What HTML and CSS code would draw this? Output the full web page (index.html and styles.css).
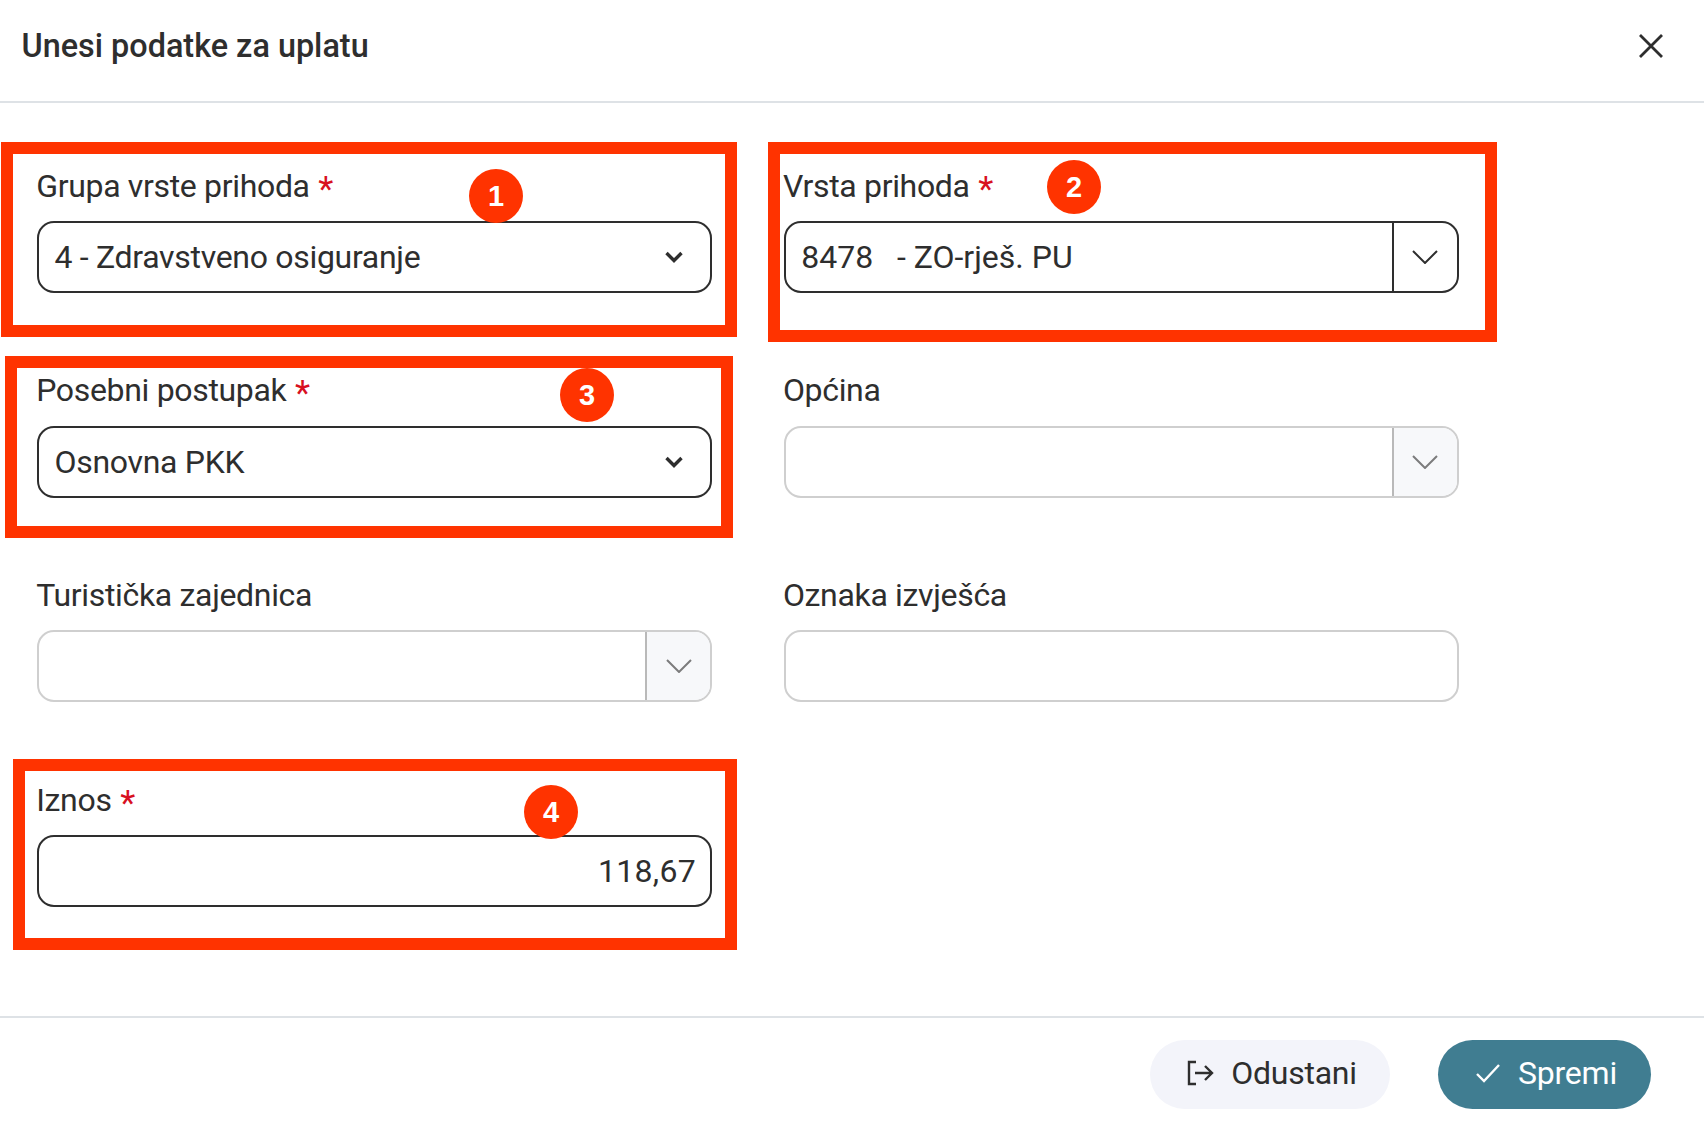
FILE: index.html
```html
<!DOCTYPE html>
<html lang="hr">
<head>
<meta charset="UTF-8" />
<meta name="viewport" content="width=device-width, initial-scale=1" />
<title>Unesi podatke za uplatu</title>
<link rel="stylesheet" href="styles.css">
</head>
<body>

<div class="dialog">
  <div class="dialog-header">
    <h1>Unesi podatke za uplatu</h1>
    <button class="close-btn" aria-label="Zatvori">
      <svg width="26" height="26" viewBox="0 0 26 26"><path d="M2 2 L24 24 M24 2 L2 24" /></svg>
    </button>
  </div>

  <div class="dialog-body">
    <div class="form-grid">
      <div class="field">
        <label>Grupa vrste prihoda <span class="req">*</span></label>
        <div class="control select">
          <span class="value">4 - Zdravstveno osiguranje</span>
          <svg class="chev-bold" width="18" height="12" viewBox="0 0 18 12"><path d="M1.5 2 L9 9.5 L16.5 2" /></svg>
        </div>
      </div>
      <div class="field">
        <label>Vrsta prihoda <span class="req">*</span></label>
        <div class="control combo">
          <span class="value">8478&nbsp;&nbsp; - ZO-rješ. PU</span>
          <span class="addon">
            <svg class="chev" width="26" height="14" viewBox="0 0 26 14"><path d="M1 1 L13 13 L25 1" /></svg>
          </span>
        </div>
      </div>
      <div class="field">
        <label>Posebni postupak <span class="req">*</span></label>
        <div class="control select">
          <span class="value">Osnovna PKK</span>
          <svg class="chev-bold" width="18" height="12" viewBox="0 0 18 12"><path d="M1.5 2 L9 9.5 L16.5 2" /></svg>
        </div>
      </div>
      <div class="field">
        <label>Općina</label>
        <div class="control combo disabled">
          <span class="value"></span>
          <span class="addon">
            <svg class="chev" width="26" height="14" viewBox="0 0 26 14"><path d="M1 1 L13 13 L25 1" /></svg>
          </span>
        </div>
      </div>
      <div class="field">
        <label>Turistička zajednica</label>
        <div class="control combo disabled">
          <span class="value"></span>
          <span class="addon">
            <svg class="chev" width="26" height="14" viewBox="0 0 26 14"><path d="M1 1 L13 13 L25 1" /></svg>
          </span>
        </div>
      </div>
      <div class="field">
        <label>Oznaka izvješća</label>
        <div class="control disabled"></div>
      </div>
      <div class="field">
        <label>Iznos <span class="req">*</span></label>
        <div class="control amount"><span class="value">118,67</span></div>
      </div>
    </div>

    <!-- oznake preko forme -->
    <div class="mark mark-1"></div>
    <div class="mark mark-2"></div>
    <div class="mark mark-3"></div>
    <div class="mark mark-4"></div>
    <div class="badge badge-1">1</div>
    <div class="badge badge-2">2</div>
    <div class="badge badge-3">3</div>
    <div class="badge badge-4">4</div>
  </div>

  <div class="dialog-footer">
    <button class="btn btn-cancel">
      <svg width="28" height="26" viewBox="0 0 28 26"><path d="M10 2 H3 V24 H10 M9 13 H26 M19 6 L26 13 L19 20" /></svg>
      Odustani
    </button>
    <button class="btn btn-save">
      <svg width="26" height="20" viewBox="0 0 26 20"><path d="M2 11 L9 18 L24 2" /></svg>
      Spremi
    </button>
  </div>
</div>

</body>
</html>
```

FILE: styles.css
```css
body {
  margin: 0;
  background: #fff;
  font-family: Roboto, "Liberation Sans", sans-serif;
  color: #2e2e2e;
}
.dialog {
  width: 1704px;
  height: 1122px;
  display: flex;
  flex-direction: column;
  overflow: hidden;
}
.dialog-header {
  box-sizing: border-box;
  height: 103px;
  border-bottom: 2px solid #dee2e6;
  display: flex;
  align-items: center;
  justify-content: space-between;
  padding: 0 40.5px 10px 21.5px;
}
h1 {
  margin: 0;
  font-size: 32.4px;
  font-weight: 500;
}
.close-btn {
  border: none;
  background: none;
  padding: 0;
  display: flex;
}
.close-btn svg path {
  fill: none;
  stroke: #2e2e2e;
  stroke-width: 2.8;
}
.dialog-body {
  position: relative;
  height: 913px;
}
.form-grid {
  display: grid;
  grid-template-columns: 675px 675px;
  column-gap: 71.7px;
  row-gap: 77.2px;
  padding: 62.8px 0 0 37px;
}
.field label {
  display: block;
  font-size: 32px;
  letter-spacing: -0.33px;
  line-height: 40px;
  margin: 0 0 15.4px -0.8px;
}
.req {
  color: #d8101f;
  font-size: 35px;
  line-height: 30px;
  margin-left: 1px;
  vertical-align: -4px;
}
.control {
  height: 72px;
  box-sizing: border-box;
  border: 2px solid #2e2e2e;
  border-radius: 17px;
  display: flex;
  align-items: center;
  font-size: 32px;
  background: #fff;
  overflow: hidden;
}
.value {
  flex: 1;
  padding-left: 15.5px;
}
.select .value {
  letter-spacing: -0.3px;
}
.select .chev-bold {
  margin-right: 27px;
  fill: none;
  stroke: #2e2e2e;
  stroke-width: 3.4;
}
.addon {
  width: 63px;
  height: 100%;
  border-left: 2px solid #2e2e2e;
  display: flex;
  align-items: center;
  justify-content: center;
}
.chev {
  fill: none;
  stroke: #2e2e2e;
  stroke-width: 2;
}
.disabled {
  border-color: #cfcfcf;
}
.disabled .addon {
  background: #f7f8fa;
  border-left-color: #b9b9b9;
}
.disabled .chev {
  stroke: #7c7c7c;
}
.amount .value {
  text-align: right;
  letter-spacing: 0.3px;
  padding: 0 14px 0 0;
}

/* oznake */
.mark {
  position: absolute;
  box-sizing: border-box;
  border: 12px solid #ff3300;
}
.mark-1 { left: 1px; top: 39px; width: 736px; height: 195px; }
.mark-2 { left: 768px; top: 39px; width: 729px; height: 200px; }
.mark-3 { left: 5px; top: 253px; width: 728px; height: 182px; }
.mark-4 { left: 13px; top: 656px; width: 724px; height: 191px; }
.badge {
  position: absolute;
  width: 54px;
  height: 54px;
  border-radius: 50%;
  background: #ff3300;
  color: #fff;
  font-family: "Liberation Sans", Arial, sans-serif;
  font-weight: bold;
  font-size: 29px;
  display: flex;
  align-items: center;
  justify-content: center;
}
.badge-1 { left: 469px; top: 66px; }
.badge-2 { left: 1047px; top: 57px; }
.badge-3 { left: 560px; top: 265px; }
.badge-4 { left: 524px; top: 682px; }

.dialog-footer {
  flex: 1;
  border-top: 2px solid #dee2e6;
  display: flex;
  justify-content: flex-end;
  align-items: flex-start;
  gap: 48px;
  padding: 22px 53px 0 0;
}
.btn {
  height: 69px;
  border: none;
  border-radius: 35px;
  display: flex;
  align-items: center;
  justify-content: center;
  gap: 17px;
  padding: 0 0 3px 3px;
  font-family: inherit;
  font-size: 32px;
  letter-spacing: -0.25px;
}
.btn svg {
  fill: none;
  stroke-width: 2.4;
}
.btn-cancel {
  width: 240px;
  background: #f3f4fa;
  color: #2e2e2e;
}
.btn-cancel svg { stroke: #2e2e2e; }
.btn-save {
  width: 213px;
  background: #407d91;
  color: #fff;
}
.btn-save svg { stroke: #fff; }
```
